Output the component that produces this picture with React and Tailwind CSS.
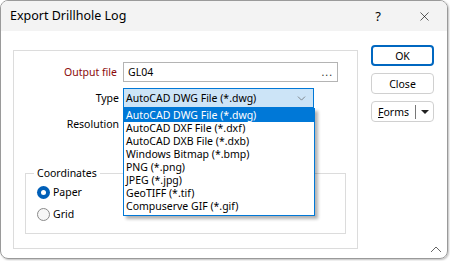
import { ChevronDown, X } from 'lucide-react';

const formats = [
  'AutoCAD DWG File (*.dwg)',
  'AutoCAD DXF File (*.dxf)',
  'AutoCAD DXB File (*.dxb)',
  'Windows Bitmap (*.bmp)',
  'PNG (*.png)',
  'JPEG (*.jpg)',
  'GeoTIFF (*.tif)',
  'Compuserve GIF (*.gif)',
];

const font = { fontFamily: '"Noto Sans", "Open Sans", sans-serif' };

const Radio = ({ checked, label }) => (
  <div className="flex items-center gap-[3px] h-[20px]">
    {checked ? (
      <span className="w-[13px] h-[13px] rounded-full bg-[#005fb8] flex items-center justify-center">
        <span className="w-[5px] h-[5px] rounded-full bg-white" />
      </span>
    ) : (
      <span className="w-[13px] h-[13px] rounded-full border border-[#8a8a8a] bg-[#f6f6f6]" />
    )}
    <span>{label}</span>
  </div>
);

const App = () => {
  return (
    <div className="w-[450px] h-[261px] bg-white text-[10.5px] leading-[14px] text-black overflow-hidden" style={font}>
      <div className="w-[448px] h-[259px] border border-[#9a9a9a] rounded-[8px] overflow-hidden flex flex-col shadow-[1px_1px_2px_rgba(0,0,0,0.25)] relative">
        <div className="h-[30px] bg-[#f3f3f3] flex items-center pl-[9px] shrink-0">
          <span className="flex-1 text-[12.5px]">Export Drillhole Log</span>
          <span className="w-[46px] text-center text-[13px]">?</span>
          <span className="w-[46px] flex justify-center">
            <X size={15} strokeWidth={1} />
          </span>
        </div>

        <div className="flex flex-1">
          <div className="ml-[12px] mt-[19px] w-[345px] h-[199px] border border-[#dcdcdc] relative">
            <div className="pt-[11px] flex flex-col gap-[6px]">
              <div className="flex items-center h-[20px]">
                <span className="w-[103px] text-right text-[#8b0a0a]">Output file</span>
                <div className="ml-[6px] w-[215px] h-[20px] border border-[#b4b4b4] flex items-center px-[4px]">
                  <span className="flex-1">GL04</span>
                  <span className="tracking-[1px] text-[#333] leading-none">...</span>
                </div>
              </div>
              <div className="flex items-center h-[20px]">
                <span className="w-[105px] text-right">Type</span>
                <div className="ml-[4px] w-[191px] h-[20px] border border-[#0078d7] bg-[#cce4f7] flex items-center pl-[2px] pr-[5px]">
                  <span className="flex-1 whitespace-nowrap">AutoCAD DWG File (*.dwg)</span>
                  <ChevronDown size={13} strokeWidth={1.2} className="text-[#555]" />
                </div>
              </div>
              <div className="flex items-center h-[20px]">
                <span className="w-[105px] text-right">Resolution</span>
              </div>
            </div>

            <div className="mx-[11px] mt-[39px] h-[61px] border border-[#dcdcdc] relative px-[11px] pt-[8px]">
              <span className="absolute -top-[8px] left-[8px] bg-white px-[3px]">Coordinates</span>
              <Radio checked label="Paper" />
              <div className="h-[2px]" />
              <Radio label="Grid" />
            </div>

            <div className="absolute left-[109px] top-[57px] w-[192px] border border-[#0078d7] bg-white shadow-[3px_3px_3px_rgba(0,0,0,0.3)] z-10 pb-[2px]">
              {formats.map((f, i) => (
                <div
                  key={f}
                  className={`h-[13px] leading-[13px] pl-[2px] whitespace-nowrap ${i === 0 ? 'bg-[#0078d7] text-white' : ''}`}
                >
                  {f}
                </div>
              ))}
            </div>
          </div>

          <div className="ml-[13px] mt-[14px] flex flex-col gap-[7px]">
            <div className="w-[63px] h-[21px] rounded-[4px] border-2 border-[#0067c0] flex items-center justify-center">
              OK
            </div>
            <div className="w-[63px] h-[21px] rounded-[4px] border border-[#d0d0d0] flex items-center justify-center">
              Close
            </div>
            <div className="w-[63px] h-[21px] rounded-[4px] border border-[#d0d0d0] flex items-center">
              <span className="flex-1 text-center">
                <span className="underline">F</span>orms
              </span>
              <span className="w-px h-[14px] bg-[#777]" />
              <span className="w-[17px] flex justify-center">
                <svg width="8" height="4" viewBox="0 0 8 4">
                  <path d="M0 0 L8 0 L4 4 Z" fill="#222" />
                </svg>
              </span>
            </div>
          </div>
        </div>

        <svg className="absolute right-[5px] bottom-[5px]" width="12" height="7" viewBox="0 0 12 7">
          <path d="M1 6 L6 1 L11 6" fill="none" stroke="#666" strokeWidth="1" />
        </svg>
      </div>
    </div>
  );
};

export default App;
